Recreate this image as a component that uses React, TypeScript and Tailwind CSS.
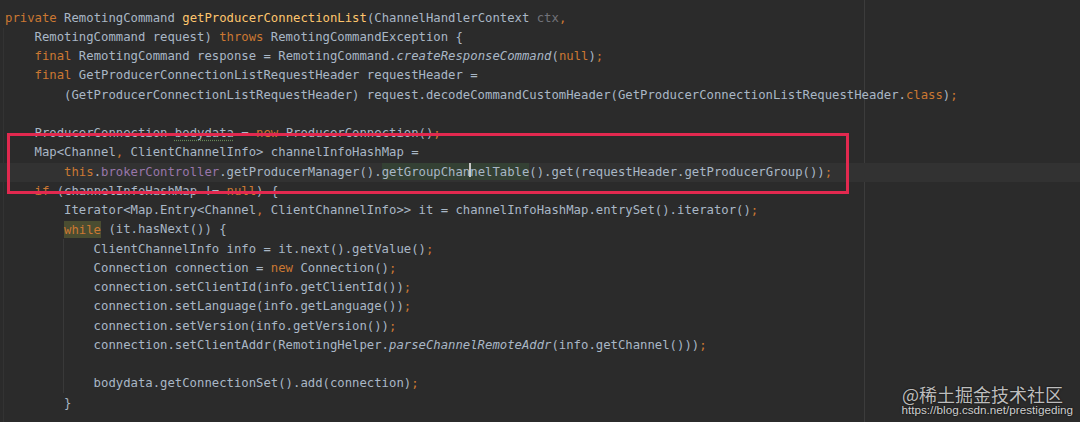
import React from "react";

type Seg = [string, string?];

const K = "text-[#cc7832]";
const D = "text-[#a9b7c6]";

const lines: Seg[][] = [
  [["private", K], [" RemotingCommand ", D], ["getProducerConnectionList", "text-[#ffc66d]"], ["(ChannelHandlerContext ", D], ["ctx", "text-[#72737a]"], [",", K]],
  [["    RemotingCommand request) ", D], ["throws", K], [" RemotingCommandException {", D]],
  [["    ", D], ["final", K], [" RemotingCommand response = RemotingCommand.", D], ["createResponseCommand", "text-[#a9b7c6] italic"], ["(", D], ["null", K], [")", D], [";", K]],
  [["    ", D], ["final", K], [" GetProducerConnectionListRequestHeader requestHeader =", D]],
  [["        (GetProducerConnectionListRequestHeader) request.decodeCommandCustomHeader(GetProducerConnectionListRequestHeader.", D], ["class", K], [")", D], [";", K]],
  [],
  [["    ProducerConnection ", D], ["bodydata", "BODY"], [" = ", D], ["new", K], [" ProducerConnection()", D], [";", K]],
  [["    Map<Channel", D], [",", K], [" ClientChannelInfo> channelInfoHashMap =", D]],
  [["        ", D], ["this", K], [".", D], ["brokerController", "text-[#9876aa]"], [".getProducerManager().", D], ["CARET", "CARET"], ["().get(requestHeader.getProducerGroup())", D], [";", K]],
  [["    ", D], ["if", K], [" (channelInfoHashMap != ", D], ["null", K], [") {", D]],
  [["        Iterator<Map.Entry<Channel", D], [",", K], [" ClientChannelInfo>> it = channelInfoHashMap.entrySet().iterator()", D], [";", K]],
  [["        ", D], ["while", "WHILE"], [" (it.hasNext()) {", D]],
  [["            ClientChannelInfo info = it.next().getValue()", D], [";", K]],
  [["            Connection connection = ", D], ["new", K], [" Connection()", D], [";", K]],
  [["            connection.setClientId(info.getClientId())", D], [";", K]],
  [["            connection.setLanguage(info.getLanguage())", D], [";", K]],
  [["            connection.setVersion(info.getVersion())", D], [";", K]],
  [["            connection.setClientAddr(RemotingHelper.", D], ["parseChannelRemoteAddr", "text-[#a9b7c6] italic"], ["(info.getChannel()))", D], [";", K]],
  [],
  [["            bodydata.getConnectionSet().add(connection)", D], [";", K]],
  [["        }", D]],
];

function renderSeg(seg: Seg, i: number) {
  const [text, cls] = seg;
  if (cls === "CARET") {
    return (
      <span key={i} className="bg-[#344134] py-[1.5px] text-[#a9b7c6]">
        getGroupChan
        <span className="relative inline-block w-0 h-[1px]">
          <span className="absolute left-[-1px] top-[-12px] w-[2px] h-[14px] bg-[#c8c8c8]" />
        </span>
        nelTable
      </span>
    );
  }
  if (cls === "WHILE") {
    return (
      <span key={i} className="bg-[#4a4d31] py-[1.5px] text-[#cc7832]">
        {text}
      </span>
    );
  }
  if (cls === "BODY") {
    return (
      <span key={i} className="text-[#a9b7c6] underline decoration-dotted decoration-[#6a8759] underline-offset-[3px]">
        {text}
      </span>
    );
  }
  return (
    <span key={i} className={cls}>
      {text}
    </span>
  );
}

export default function App() {
  return (
    <div
      className="relative w-[1080px] h-[422px] overflow-hidden bg-[#2b2b2b]"
      style={{ fontFamily: '"DejaVu Sans Mono", "Liberation Mono", monospace' }}
    >
      {/* right margin guide */}
      <div className="absolute left-[864px] top-0 bottom-0 w-px bg-[#3c3c3c]" />
      {/* indent guides */}
      <div className="absolute left-[3px] top-[28px] bottom-0 w-px bg-[#333333]" />
      <div className="absolute left-[63px] top-[239px] h-[154px] w-px bg-[#393939]" />

      <div className="relative pt-[8.5px] pl-[5px] text-[12.28px]">
        {lines.map((segs, idx) => (
          <div
            key={idx}
            className={
              "h-[19.25px] leading-[19.25px] whitespace-pre " +
              (idx === 8 ? "bg-[#323232] -ml-[5px] pl-[5px]" : "")
            }
          >
            {segs.length === 0 ? " " : segs.map(renderSeg)}
          </div>
        ))}
      </div>

      {/* red annotation box */}
      <div className="absolute left-[7px] top-[133px] w-[842px] h-[61px] border-[3px] border-[#e2294f]" />

      {/* watermark */}
      <div className="absolute right-[7px] bottom-[6px] flex flex-col items-end">
        <div
          className="mr-[10px] text-[18px] leading-[18px] text-[#bdbdbd] [text-shadow:0_0_2px_rgba(0,0,0,0.9)]"
          style={{ fontFamily: '"Noto Sans CJK SC", "Noto Sans", sans-serif' }}
        >
          @稀土掘金技术社区
        </div>
        <div
          className="text-[11.7px] leading-[13px] text-[#cfcfcf] [text-shadow:0_0_2px_rgba(0,0,0,0.9)]"
          style={{ fontFamily: '"Liberation Sans", Arial, sans-serif' }}
        >
          https://blog.csdn.net/prestigeding
        </div>
      </div>
    </div>
  );
}
